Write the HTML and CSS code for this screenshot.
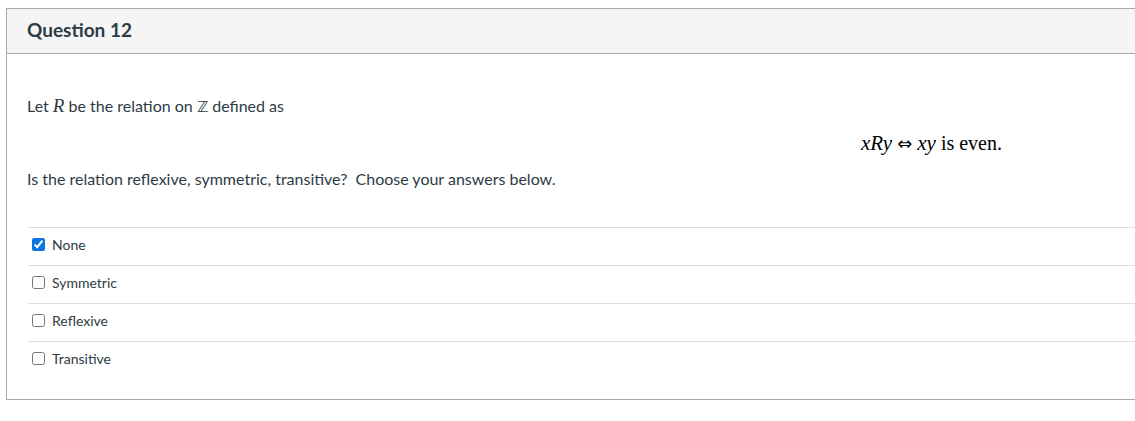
FILE: index.html
```html
<!DOCTYPE html>
<html>
<head>
<meta charset="utf-8">
<link rel="stylesheet" href="styles.css">
</head>
<body>
<div class="question">
  <div class="q-header"><span class="q-title">Question 12</span></div>
  <div class="q-body">
    <p class="q-text">Let <span class="mi">R</span> be the relation on <span class="bb">ℤ</span> defined as</p>
    <div class="display-math"><span class="mi">x</span><span class="mi">R</span><span class="mi">y</span> <span class="op">⇔</span> <span class="mi">x</span><span class="mi">y</span> is even.</div>
    <p class="q-text">Is the relation reflexive, symmetric, transitive?&nbsp; Choose your answers below.</p>
    <div class="answers">
      <label class="answer"><input type="checkbox" checked><span>None</span></label>
      <label class="answer"><input type="checkbox"><span>Symmetric</span></label>
      <label class="answer"><input type="checkbox"><span>Reflexive</span></label>
      <label class="answer"><input type="checkbox"><span>Transitive</span></label>
    </div>
  </div>
</div>
</body>
</html>
```
FILE: styles.css
```css
html, body {
  margin: 0;
  padding: 0;
  overflow: hidden;
  background: #fff;
}
body {
  font-family: Lato, "Open Sans", sans-serif;
  color: #2d3b45;
}
.question {
  margin: 8px 0 0 6px;
  width: 1850px;
  border: 1px solid #aaaaaa;
  border-right: none;
}
.q-header {
  height: 45px;
  box-sizing: border-box;
  padding-bottom: 3px;
  background: #f5f5f5;
  border-bottom: 1px solid #aaaaaa;
  display: flex;
  align-items: center;
  padding-left: 20px;
}
.q-title {
  font-size: 19px;
  font-weight: 700;
  color: #2d3b45;
}
.q-body {
  padding: 42px 21px 20px 20px;
}
.q-text {
  margin: 0;
  font-size: 16px;
  line-height: 20px;
}
.mi {
  font-family: "Liberation Serif", "DejaVu Serif", serif;
  font-style: italic;
  font-size: 19px;
}
.bb {
  font-family: "DejaVu Sans", sans-serif;
  font-size: 15px;
}
.display-math {
  margin: 16px 0 16px 0;
  height: 20px;
  line-height: 20px;
  text-align: center;
  font-family: "Liberation Serif", "DejaVu Serif", serif;
  font-size: 20px;
  color: #000;
}
.display-math .mi {
  font-size: 21px;
}
.display-math .op {
  font-family: "DejaVu Sans", sans-serif;
  font-size: 18px;
}
.answers {
  margin-top: 38px;
  display: flex;
  flex-direction: column;
}
.answer {
  display: flex;
  align-items: center;
  height: 37px;
  box-sizing: content-box;
  border-top: 1px solid #dddddd;
  margin-left: 1px;
  font-size: 14px;
}
.answer input {
  margin: 0 3px 4px 4px;
  width: 13px;
  height: 13px;
  accent-color: #0b74e5;
}
.answer span {
  margin-left: 4px;
  margin-bottom: 4px;
}
```
